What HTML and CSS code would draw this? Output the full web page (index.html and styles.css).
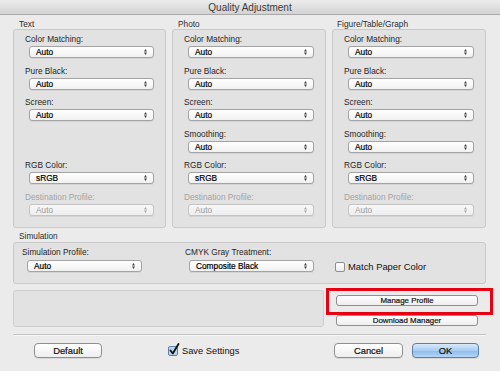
FILE: index.html
```html
<!DOCTYPE html>
<html>
<head>
<meta charset="utf-8">
<link rel="stylesheet" href="styles.css">
</head>
<body>
<div class="window">
  <div class="titlebar">Quality Adjustment</div>
  <div class="main">
    <div class="columns">
      <div class="col">
        <div class="heading">Text</div>
        <div class="box">
          <div class="field"><div class="lbl">Color Matching:</div><div class="sel"><span>Auto</span><svg class="arr" width="3" height="6" viewBox="0 0 3 6"><path d="M0 2.5L1.5 0L3 2.5Z M0 3.5L1.5 6L3 3.5Z"/></svg></div></div>
          <div class="field"><div class="lbl">Pure Black:</div><div class="sel"><span>Auto</span><svg class="arr" width="3" height="6" viewBox="0 0 3 6"><path d="M0 2.5L1.5 0L3 2.5Z M0 3.5L1.5 6L3 3.5Z"/></svg></div></div>
          <div class="field"><div class="lbl">Screen:</div><div class="sel"><span>Auto</span><svg class="arr" width="3" height="6" viewBox="0 0 3 6"><path d="M0 2.5L1.5 0L3 2.5Z M0 3.5L1.5 6L3 3.5Z"/></svg></div></div>
          <div class="field spacer"></div>
          <div class="field"><div class="lbl">RGB Color:</div><div class="sel"><span>sRGB</span><svg class="arr" width="3" height="6" viewBox="0 0 3 6"><path d="M0 2.5L1.5 0L3 2.5Z M0 3.5L1.5 6L3 3.5Z"/></svg></div></div>
          <div class="field disabled"><div class="lbl">Destination Profile:</div><div class="sel"><span>Auto</span><svg class="arr" width="3" height="6" viewBox="0 0 3 6"><path d="M0 2.5L1.5 0L3 2.5Z M0 3.5L1.5 6L3 3.5Z"/></svg></div></div>
        </div>
      </div>
      <div class="col">
        <div class="heading">Photo</div>
        <div class="box">
          <div class="field"><div class="lbl">Color Matching:</div><div class="sel"><span>Auto</span><svg class="arr" width="3" height="6" viewBox="0 0 3 6"><path d="M0 2.5L1.5 0L3 2.5Z M0 3.5L1.5 6L3 3.5Z"/></svg></div></div>
          <div class="field"><div class="lbl">Pure Black:</div><div class="sel"><span>Auto</span><svg class="arr" width="3" height="6" viewBox="0 0 3 6"><path d="M0 2.5L1.5 0L3 2.5Z M0 3.5L1.5 6L3 3.5Z"/></svg></div></div>
          <div class="field"><div class="lbl">Screen:</div><div class="sel"><span>Auto</span><svg class="arr" width="3" height="6" viewBox="0 0 3 6"><path d="M0 2.5L1.5 0L3 2.5Z M0 3.5L1.5 6L3 3.5Z"/></svg></div></div>
          <div class="field"><div class="lbl">Smoothing:</div><div class="sel"><span>Auto</span><svg class="arr" width="3" height="6" viewBox="0 0 3 6"><path d="M0 2.5L1.5 0L3 2.5Z M0 3.5L1.5 6L3 3.5Z"/></svg></div></div>
          <div class="field"><div class="lbl">RGB Color:</div><div class="sel"><span>sRGB</span><svg class="arr" width="3" height="6" viewBox="0 0 3 6"><path d="M0 2.5L1.5 0L3 2.5Z M0 3.5L1.5 6L3 3.5Z"/></svg></div></div>
          <div class="field disabled"><div class="lbl">Destination Profile:</div><div class="sel"><span>Auto</span><svg class="arr" width="3" height="6" viewBox="0 0 3 6"><path d="M0 2.5L1.5 0L3 2.5Z M0 3.5L1.5 6L3 3.5Z"/></svg></div></div>
        </div>
      </div>
      <div class="col">
        <div class="heading">Figure/Table/Graph</div>
        <div class="box">
          <div class="field"><div class="lbl">Color Matching:</div><div class="sel"><span>Auto</span><svg class="arr" width="3" height="6" viewBox="0 0 3 6"><path d="M0 2.5L1.5 0L3 2.5Z M0 3.5L1.5 6L3 3.5Z"/></svg></div></div>
          <div class="field"><div class="lbl">Pure Black:</div><div class="sel"><span>Auto</span><svg class="arr" width="3" height="6" viewBox="0 0 3 6"><path d="M0 2.5L1.5 0L3 2.5Z M0 3.5L1.5 6L3 3.5Z"/></svg></div></div>
          <div class="field"><div class="lbl">Screen:</div><div class="sel"><span>Auto</span><svg class="arr" width="3" height="6" viewBox="0 0 3 6"><path d="M0 2.5L1.5 0L3 2.5Z M0 3.5L1.5 6L3 3.5Z"/></svg></div></div>
          <div class="field"><div class="lbl">Smoothing:</div><div class="sel"><span>Auto</span><svg class="arr" width="3" height="6" viewBox="0 0 3 6"><path d="M0 2.5L1.5 0L3 2.5Z M0 3.5L1.5 6L3 3.5Z"/></svg></div></div>
          <div class="field"><div class="lbl">RGB Color:</div><div class="sel"><span>sRGB</span><svg class="arr" width="3" height="6" viewBox="0 0 3 6"><path d="M0 2.5L1.5 0L3 2.5Z M0 3.5L1.5 6L3 3.5Z"/></svg></div></div>
          <div class="field disabled"><div class="lbl">Destination Profile:</div><div class="sel"><span>Auto</span><svg class="arr" width="3" height="6" viewBox="0 0 3 6"><path d="M0 2.5L1.5 0L3 2.5Z M0 3.5L1.5 6L3 3.5Z"/></svg></div></div>
        </div>
      </div>
    </div>

    <div class="heading sim-heading">Simulation</div>
    <div class="box sim-box">
      <div class="sim-field sim-profile"><div class="lbl">Simulation Profile:</div><div class="sel"><span>Auto</span><svg class="arr" width="3" height="6" viewBox="0 0 3 6"><path d="M0 2.5L1.5 0L3 2.5Z M0 3.5L1.5 6L3 3.5Z"/></svg></div></div>
      <div class="sim-field sim-cmyk"><div class="lbl">CMYK Gray Treatment:</div><div class="sel"><span>Composite Black</span><svg class="arr" width="3" height="6" viewBox="0 0 3 6"><path d="M0 2.5L1.5 0L3 2.5Z M0 3.5L1.5 6L3 3.5Z"/></svg></div></div>
      <label class="check-row"><span class="checkbox"></span><span class="check-text">Match Paper Color</span></label>
    </div>

    <div class="lower">
      <div class="panel"></div>
      <div class="side-buttons">
        <div class="btn small">Manage Profile</div>
        <div class="btn small">Download Manager</div>
      </div>
    </div>

    <div class="separator"></div>

    <div class="footer">
      <div class="btn big default">Default</div>
      <label class="save">
        <svg class="save-check" width="13" height="13" viewBox="0 0 13 13"><rect x="0.5" y="3.5" width="9" height="9" rx="1.5" fill="#bcd6f0" stroke="#5f7fa6"/><path d="M2.5 7.5L4.8 10.5L10.5 1" fill="none" stroke="#111" stroke-width="1.8" stroke-linecap="round" stroke-linejoin="round"/></svg>
        <span class="check-text">Save Settings</span>
      </label>
      <div class="grow"></div>
      <div class="btn big cancel">Cancel</div>
      <div class="btn big ok">OK</div>
    </div>
  </div>
  <div class="highlight"></div>
</div>
</body>
</html>
```

FILE: styles.css
```css
* { box-sizing: border-box; }
html, body { margin: 0; padding: 0; }
body {
  width: 500px;
  height: 371px;
  overflow: hidden;
  background: #ebebeb;
  font-family: "Liberation Sans", Arial, sans-serif;
  color: #1c1c1c;
}
.window { position: relative; width: 500px; height: 371px; }
.titlebar {
  height: 15px;
  line-height: 15px;
  text-align: center;
  font-size: 10px;
  color: #3a3a3a;
  background: linear-gradient(#ececec, #d3d3d3);
  border-bottom: 1px solid #a9a9a9;
}
.main { padding: 0 14px 0 13px; }
.columns {
  display: grid;
  grid-template-columns: 153px 154px 154px;
  column-gap: 6px;
  margin-top: 4px;
}
.heading {
  font-size: 8.3px;
  line-height: 10px;
  height: 10px;
  color: #2b2b2b;
  padding-left: 6px;
}
.col:nth-child(3) .heading { padding-left: 5px; }
.box {
  background: #e2e2e2;
  border: 1px solid #c9c9c9;
  border-radius: 3px;
}
.col .box {
  height: 199px;
  padding: 3px 11px 0 11px;
  display: flex;
  flex-direction: column;
  gap: 6.6px;
}
.lbl {
  font-size: 8.3px;
  line-height: 12px;
  height: 12px;
  color: #1f1f1f;
  white-space: nowrap;
}
.field .sel { margin: 1px 0 0 4px; }
.spacer { height: 25px; }
.sel {
  height: 12px;
  display: flex;
  align-items: center;
  justify-content: space-between;
  padding: 0 6px 0 6px;
  background: linear-gradient(#ffffff, #f1f1f1);
  border: 1px solid #a3a3a3;
  border-radius: 3px;
  box-shadow: 0 1px 0 rgba(0,0,0,0.06);
  font-size: 8.3px;
  color: #000;
  white-space: nowrap;
}
.sel span { font-weight: normal; -webkit-text-stroke: 0.2px #000; }
.arr { fill: #444; flex: none; }
.disabled .lbl { color: #a3a3a3; }
.disabled .sel { border-color: #c4c4c4; background: linear-gradient(#f7f7f7, #eeeeee); color: #9a9a9a; }
.disabled .sel span { -webkit-text-stroke: 0; }
.disabled .arr { fill: #a8a8a8; }

.sim-heading { margin-top: 3px; margin-bottom: 1px; }
.sim-box {
  height: 42px;
  display: flex;
  align-items: flex-start;
  padding: 3px 0 0 8px;
}
.sim-field .sel { margin: 2px 0 0 5px; }
.sim-profile { width: 120px; }
.sim-cmyk { width: 129px; margin-left: 43px; }
.sim-cmyk .sel { margin-left: 4px; }
.check-row {
  display: flex;
  align-items: center;
  margin: 15px 0 0 21px;
}
.checkbox {
  width: 10px;
  height: 10px;
  border: 1px solid #8e8e8e;
  border-radius: 2px;
  background: linear-gradient(#ffffff, #ebebeb);
  margin-right: 3px;
}
.check-text { font-size: 9.4px; color: #111; }

.lower {
  display: flex;
  margin-top: 6px;
  height: 37px;
}
.panel {
  width: 311px;
  height: 37px;
  background: #e2e2e2;
  border: 1px solid #cdcdcd;
  border-radius: 3px;
}
.side-buttons {
  margin-left: 12px;
  width: 142px;
  padding-top: 5px;
  display: flex;
  flex-direction: column;
  gap: 9px;
}
.btn {
  display: flex;
  align-items: center;
  justify-content: center;
  background: linear-gradient(#ffffff, #eeeeee);
  border: 1px solid #8f8f8f;
  color: #111;
  white-space: nowrap;
}
.btn.small {
  height: 11px;
  border-radius: 3px;
  font-size: 7.9px;
  -webkit-text-stroke: 0.2px #111;
}
.separator {
  margin-top: 7px;
  height: 2px;
  border-top: 1px solid #c3c3c3;
  border-bottom: 1px solid #f7f7f7;
}
.footer {
  display: flex;
  align-items: center;
  margin-top: 7px;
  height: 15px;
  padding: 0 7px 0 21px;
}
.btn.big {
  height: 15px;
  border-radius: 4px;
  font-size: 9.4px;
  -webkit-text-stroke: 0.2px #111;
  box-shadow: 0 1px 0 rgba(0,0,0,0.08);
}
.default { width: 68px; }
.save {
  display: flex;
  align-items: center;
  margin-left: 66px;
}
.save-check { margin-right: 1px; margin-top: -3px; }
.save .check-text { font-size: 9.3px; }
.grow { flex: 1; }
.cancel { width: 69px; }
.ok {
  width: 67px;
  margin-left: 9px;
  background: linear-gradient(#d8e9fa, #a9cdf2 50%, #8dbbe9 51%, #b3d6f7);
  border-color: #5b7fab;
}
.highlight {
  position: absolute;
  left: 326px;
  top: 288px;
  width: 167px;
  height: 27px;
  border: 3px solid #e60012;
}
```
